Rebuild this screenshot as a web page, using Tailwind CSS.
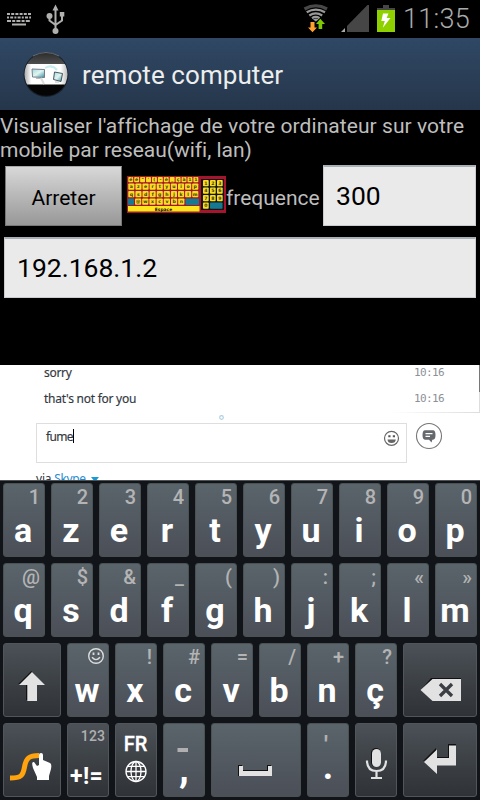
<!DOCTYPE html>
<html lang="fr">
<head>
<meta charset="utf-8">
<title>remote computer</title>
<script src="https://cdn.jsdelivr.net/npm/@tailwindcss/browser@4"></script>
</head>
<body class="w-[480px] h-[800px] overflow-hidden bg-black font-['Roboto',sans-serif]">
<header class="h-[38px] flex items-start">
  <svg class="w-[75px] h-[38px]" viewBox="0 0 75 38">
    <g stroke="#b0b0ae" stroke-width="2" fill="none">
      <path d="M7 14H31" stroke-dasharray="3 1.2"/><path d="M7 17.5H31" stroke-dasharray="2 1.2 3 1.2"/><path d="M7 21H31" stroke-dasharray="4 1.2 3 1.2"/><path d="M12 24.5H26"/>
      <path d="M55.5 9V31M49.5 16V20.5L55.5 25M62 15V20.5L55.5 25"/>
    </g>
    <g fill="#b0b0ae"><path d="M55.5 4.5L58.5 10.5H52.5Z"/><circle cx="49.5" cy="16" r="3"/><circle cx="55.5" cy="31" r="3"/><path d="M59.8 12H64.3V16.5H59.8Z"/></g>
  </svg>
  <svg class="w-[98px] h-[38px] ml-[227px]" viewBox="302 0 98 38">
    <g fill="none" stroke="#999" stroke-width="2.3">
      <path d="M304.5 9Q315.8 2.5 327 9" stroke="#484848" stroke-width="3.2"/>
      <path d="M306.7 12.2Q315.8 7 325 12.2"/><path d="M309.3 15.4Q315.8 11.5 322.2 15.4"/><path d="M312 18.2Q315.8 15.7 319.5 18.2"/>
    </g>
    <path d="M313 19.4Q315.8 17.8 318.6 19.4L315.8 21.5Z" fill="#999"/>
    <path d="M310.5 22H314.5V27.5H317L312.5 32.3L308 27.5H310.5Z" fill="#ffa12e"/>
    <path d="M320.3 18.8L325 24H322.2V29H318.6V24H316Z" fill="#7fc900"/>
    <path d="M341 32L345 28V32Z" fill="#aaa"/><path d="M347 32V26L367.5 5H369V32Z" fill="#464646"/>
    <path d="M383 5H389V8H395V10H377V8H383Z" fill="#464646"/><path d="M377 10H395V32H377Z" fill="#8fd000"/>
    <path d="M383 13.5H388.5L386.6 18H390.5L382.8 27.8L384.8 21H381.3Z" fill="#fff"/>
  </svg>
  <div class="ml-[3px] mt-[3px] text-[27px] leading-[32px] tracking-[0.3px] font-light text-[#aaa] whitespace-nowrap">11:35</div>
</header>
<div class="h-[72px] flex items-center bg-linear-to-b from-[#304865] to-[#25364a]">
  <svg class="w-[46px] h-[48px] ml-[23px]" viewBox="0 0 46 48">
    <defs>
      <linearGradient id="cap" x1="0" y1="0" x2="0" y2="1"><stop offset="0" stop-color="#242424"/><stop offset="1" stop-color="#555"/></linearGradient>
      <linearGradient id="screen" x1="0" y1="0" x2="1" y2="1"><stop stop-color="#a4d5dd"/><stop offset=".5" stop-color="#e1f5f2"/><stop offset="1" stop-color="#368ea1"/></linearGradient>
      <linearGradient id="band" x1="0" y1="0" x2="1" y2="0"><stop stop-color="#999"/><stop offset=".18" stop-color="#fff"/><stop offset=".82" stop-color="#fff"/><stop offset="1" stop-color="#aaa"/></linearGradient>
      <clipPath id="disc"><circle cx="23" cy="24.3" r="21.5"/></clipPath>
    </defs>
    <circle cx="23" cy="24.5" r="22.5" fill="#17202c"/>
    <g clip-path="url(#disc)"><path d="M0 0H46V16H0Z" fill="url(#cap)"/><path d="M0 14H46V35H0Z" fill="url(#band)"/><path d="M0 34.5H46V48H0Z" fill="#050505"/>
    <path d="M9 19L21.5 19.5V27.5L9.5 27Z" fill="url(#screen)" stroke="#66757a" stroke-width=".9"/><path d="M31.5 22L39.5 23.5L38 31.5L30.5 29.5Z" fill="url(#screen)" stroke="#37474c" stroke-width=".9"/><path d="M22 18Q29 14 34 20" fill="none" stroke="#c7edef" stroke-width="2"/><path d="M13 28.5H18M32 32H36" stroke="#bbb"/><path d="M18 28L21 34" stroke="#ddd" stroke-width="2"/></g>
    <path d="M10 6Q23 -1 36 6" fill="none" stroke="#888" stroke-width=".7"/>
  </svg>
  <div class="ml-[13px] mt-[2px] text-[26px] leading-[32px] tracking-[0.08px] text-[#ededed] whitespace-nowrap">remote computer</div>
</div>
<main class="h-[255px]">
  <p class="pt-[4px] text-[21px] leading-[24px] tracking-[0.06px] text-[#bebebe] whitespace-nowrap">Visualiser l'affichage de votre ordinateur sur votre<br><span class="tracking-[-0.03px]">mobile par reseau(wifi, lan)</span></p>
  <div class="flex mt-[3px] h-[61px]">
    <button class="ml-[5px] mt-[1px] w-[117px] h-[60px] border border-[#777] border-t-[#aaa] bg-linear-to-b from-[#d8d8d8] to-[#989898] text-[21px] leading-[24px] pt-[3px] text-black">Arreter</button>
    <svg id="mini" class="ml-[5px] mt-[11px] w-[99px] h-[37px]" viewBox="0 0 99 37" font-family="DejaVu Sans" font-weight="700" font-size="4.6" text-anchor="middle"></svg>
    <div id="freq" class="w-[97px] pt-[21px] text-[21px] leading-[24px] text-[#bebebe]">frequence</div>
    <div class="w-[153px] h-[61px] border border-[#c8ccd0] border-t-2 border-t-[#a9b0b5] bg-[#eaeaea] pl-[12px] pt-[13px] text-[26.5px] leading-[32px] text-black">300</div>
  </div>
  <div class="ml-[4px] mt-[11px] w-[472px] h-[61px] border border-[#c8ccd0] border-t-2 border-t-[#a9b0b5] bg-[#eaeaea] pl-[12px] pt-[13px] text-[26.5px] leading-[32px] text-black">192.168.1.2</div>
</main>
<section class="relative h-[115px] overflow-hidden bg-white font-['Noto_Sans',sans-serif] text-[12px] leading-[16px] text-[#333842]">
  <div class="flex justify-between pl-[44px] pr-[36px] h-[26px]"><span class="tracking-[-0.3px] [-webkit-text-stroke:0.15px]">sorry</span><span class="font-['DejaVu_Sans_Mono',monospace] text-[11px] tracking-[-0.6px] text-[#8d9098]">10:16</span></div>
  <div class="flex justify-between pl-[44px] pr-[36px] h-[32px]"><span class="tracking-[-0.25px] [-webkit-text-stroke:0.15px]">that's not for you</span><span class="font-['DejaVu_Sans_Mono',monospace] text-[11px] tracking-[-0.6px] text-[#8d9098]">10:16</span></div>
  <div class="flex">
    <div class="ml-[36px] w-[371px] h-[40px] border border-[#dedede] flex items-start pl-[9px] pt-[5px]"><span class="tracking-[-0.7px] [-webkit-text-stroke:0.15px]">fume</span><span class="w-px h-[14px] bg-black"></span></div>
    <svg class="ml-[8px] -mt-[1px] w-[28px] h-[28px]" viewBox="0 0 28 28"><circle cx="14" cy="14" r="12.5" fill="#fff" stroke="#777" stroke-width="1.1"/><path d="M10 8.3H18Q20.5 8.5 20.5 13Q20.5 17.5 18 17.7H17.3L16.5 20.5L14 17.7H10Q7.5 17.5 7.5 13Q7.5 8.5 10 8.3Z" fill="#65686c"/><path d="M10.5 11.6H17.5M10.5 14.4H15" stroke="#fff" stroke-width="1.1"/></svg>
  </div>
  <div class="ml-[36px] mt-[8px] tracking-[-0.2px] whitespace-nowrap">via <span class="text-[#278bd0] tracking-[-0.4px]">Skype</span><svg class="inline w-[8px] h-[6px] ml-[5px]" viewBox="0 0 8 6"><path d="M0 0H8L4 5Z" fill="#189bd5"/></svg></div>
  <svg class="absolute inset-0 w-[480px] h-[115px]" viewBox="0 365 480 115" fill="none">
    <defs><linearGradient id="fade"><stop stop-color="#fff"/><stop offset="1" stop-color="#ddd"/></linearGradient></defs>
    <path d="M390 412H479V413H390Z" fill="url(#fade)"/><path d="M479.5 365V392" stroke="#777"/><path d="M479.5 392V413" stroke="#ddd"/>
    <circle cx="221.5" cy="417.5" r="1.8" stroke="#add0df" stroke-width="1.2"/>
    <circle cx="391.5" cy="438.3" r="7" stroke="#666" stroke-width="1.2"/><path d="M388.3 436.3H390.5M392.8 436.3H395" stroke="#555" stroke-width="2"/><path d="M387.5 439.5H395.8Q395.5 443 391.5 443Q387.7 443 387.5 439.5Z" fill="#666"/>
  </svg>
</section>
<section id="keyboard" class="h-[320px] border-t border-[#4d5254] bg-[#11151a] px-[3px] pt-[2px] flex flex-col gap-[6px]"></section>
<script>
const light = "relative w-[42px] h-[74px] shrink-0 rounded-[3px] border border-[#4c5154] bg-linear-to-b from-[#5a646b] to-[#4b4f57] text-center text-white";
const dark = "relative h-[74px] shrink-0 rounded-[3px] border border-[#50565a] bg-linear-to-b from-[#4b5157] to-[#2f3236] text-white";
const smile = '<svg class="absolute right-[3px] top-[3px] w-[18px] h-[18px]" viewBox="0 0 18 18" fill="none" stroke="#ddd" stroke-width="1.4"><circle cx="9" cy="9" r="7.3"/><path d="M5 10.3Q9 15 13 10.3"/><path d="M6.5 5.5V8M11.5 5.5V8" stroke-width="1.8"/></svg>';
const key = (letter, hint) => `<div class="${light}">${hint === "smile" ? smile : `<span class="absolute right-[4px] top-[1px] text-[20px] leading-[24px] font-medium text-[#b4b4b4]">${hint}</span>`}<span class="block pt-[26px] -ml-[2px] text-[34px] leading-[40px] font-bold">${letter}</span></div>`;
const icon = (width, body) => `<div class="${dark} ${width}"><svg class="absolute -left-px -top-px w-full h-full overflow-visible" fill="#e2e2e2">${body}</svg></div>`;
const row = html => `<div class="flex gap-[6px]">${html}</div>`;
const letters = (s, hints) => [...s].map((c, i) => key(c, hints[i])).join("");
const shift = icon("w-[58px]", '<path d="M28.3 28L15.2 41H23V57H25V42H40Z" fill="#111"/><path d="M29 29L16 42H24.3V58H34V42H42Z"/>');
const back = icon("w-[74px]", '<path d="M28 35H58V37L28 38L17 48Z" fill="#111"/><path d="M17.5 47L29.5 36H58V58H29.5Z"/><path d="M37 41L49 53M49 41L37 53" stroke="#3b3e42" stroke-width="3.3"/>');
const swype = icon("w-[58px]", '<path d="M7 55C18 55 20 53 21.5 44S26 32.5 36 32.5" fill="none" stroke="#ffa30f" stroke-width="5"/><path d="M36 32Q36 30 38 30T40 32V37L47 40Q49 41 48 46L46 53V57H34V54L30 45Q28 38 31 39L34 43L36 42Z" fill="#fff"/>');
const symbols = `<div class="${dark} w-[42px]"><span class="absolute right-[3px] top-[3px] text-[14px] leading-[18px] font-medium tracking-[0.1px] text-[#b0b0b0]">123</span><span class="absolute left-[2px] top-[40px] text-[23px] leading-[26px] tracking-[0.4px] font-bold">+!=</span></div>`;
const language = `<div class="${dark} w-[42px] text-center"><span class="block pt-[8px] -ml-px text-[20px] leading-[24px] font-medium [-webkit-text-stroke:0.3px]">FR</span><svg class="absolute left-[9px] top-[36px] w-[24px] h-[24px]" viewBox="0 0 24 24" fill="none" stroke="#fff" stroke-width="1.3"><circle cx="11" cy="11.5" r="10"/><ellipse cx="11" cy="11.5" rx="5" ry="10"/><path d="M11 1.5V21.5M1 11.5H21M2.5 6.3H19.5M2.5 16.7H19.5"/></svg></div>`;
const comma = `<div class="${light}"><svg class="absolute left-0 top-0 w-[40px] h-[72px]"><path d="M13.5 24H24V28H13.5Z" fill="#b0b0b0"/></svg><span class="block pt-[25px] text-[40px] leading-[40px] font-bold">,</span></div>`;
const space = `<div class="${light} w-[90px]!"><svg class="absolute -left-px -top-px w-[90px] h-[74px]"><path d="M27 42H31V43H28V53H27ZM32 47H57V48H32ZM56 42H60V43H57V47H56Z" fill="#111"/><path d="M28 43H32V48H57V43H61V53H28Z" fill="#e2e2e2"/></svg></div>`;
const dot = `<div class="${light}"><span class="absolute left-[16px] top-[9px] text-[24px] leading-[24px] font-bold text-[#b0b0b0]">'</span><span class="block pt-[23px] text-[36px] leading-[40px] font-bold">.</span></div>`;
const mic = icon("w-[42px]", '<rect x="16" y="25" width="10" height="19" rx="5" fill="#111"/><rect x="17" y="26" width="9" height="18" rx="4.5"/><path d="M12 37.5Q12 48 21.5 48Q31 48 31 37.5M21.5 48V54M16 55H27" fill="none" stroke="#e2e2e2" stroke-width="2.2"/>');
const enter = icon("w-[74px]", '<path d="M20 38L33 25V34H45V21H53V23L46 36L32 35Z" fill="#111"/><path d="M21 39L34 26.5V35H46V22.5H53V42.5H34V51Z"/>');
document.getElementById("keyboard").innerHTML =
  row(letters("azertyuiop", "1234567890")) + row(letters("qsdfghjklm", "@$&_():;«»")) +
  row(shift + letters("wxcvbnç", ["smile", "!", "#", "=", "/", "+", "?"]) + back) +
  row(swype + symbols + language + comma + space + dot + mic + enter);

let k = '<path d="M0 0H99V37H0Z" fill="#a5152d"/><path d="M74 3H97V34H74Z" fill="#151515"/>';
const cap = (x, y, w, h, c, color) => `<rect x="${x}" y="${y}" width="${w}" height="${h}" rx=".8" fill="${color || "#f8dd20"}"/><text x="${x + w / 2}" y="${y + h - 1.4}" fill="#443a10">${c}</text>`;
["éé\"'(-è_çà11", "azertyuiop", "qsdfghjklm"].forEach((s, r) => [...s].forEach((c, i) => { const n = s.length; k += cap(1.3 + i * 71 / n, [1, 7.5, 15][r], 71 / n - 1, [5.3, 6.3, 6.3][r], c); }));
k += cap(1, 22.5, 6, 6.5, "", "#167992");
[..."@wxcvbn"].forEach((c, i) => k += cap(8 + i * 7.2, 22.5, 6.2, 6.3, c));
k += cap(58.5, 22.5, 13.5, 6.5, "", "#167992") + '<path d="M1 30H72.5V35.5H1Z" fill="#ffe51c"/><text x="36.5" y="34.5" font-size="4.4" fill="#111">Espace</text>';
[..."1234567890"].forEach((c, i) => k += cap(76 + i % 3 * 7, 4 + Math.floor(i / 3) * 7.5, 5.7, 6.2, c));
k += cap(83, 26.5, 12.5, 6.2, "", "#167992");
document.getElementById("mini").innerHTML = k;
</script>
</body>
</html>
